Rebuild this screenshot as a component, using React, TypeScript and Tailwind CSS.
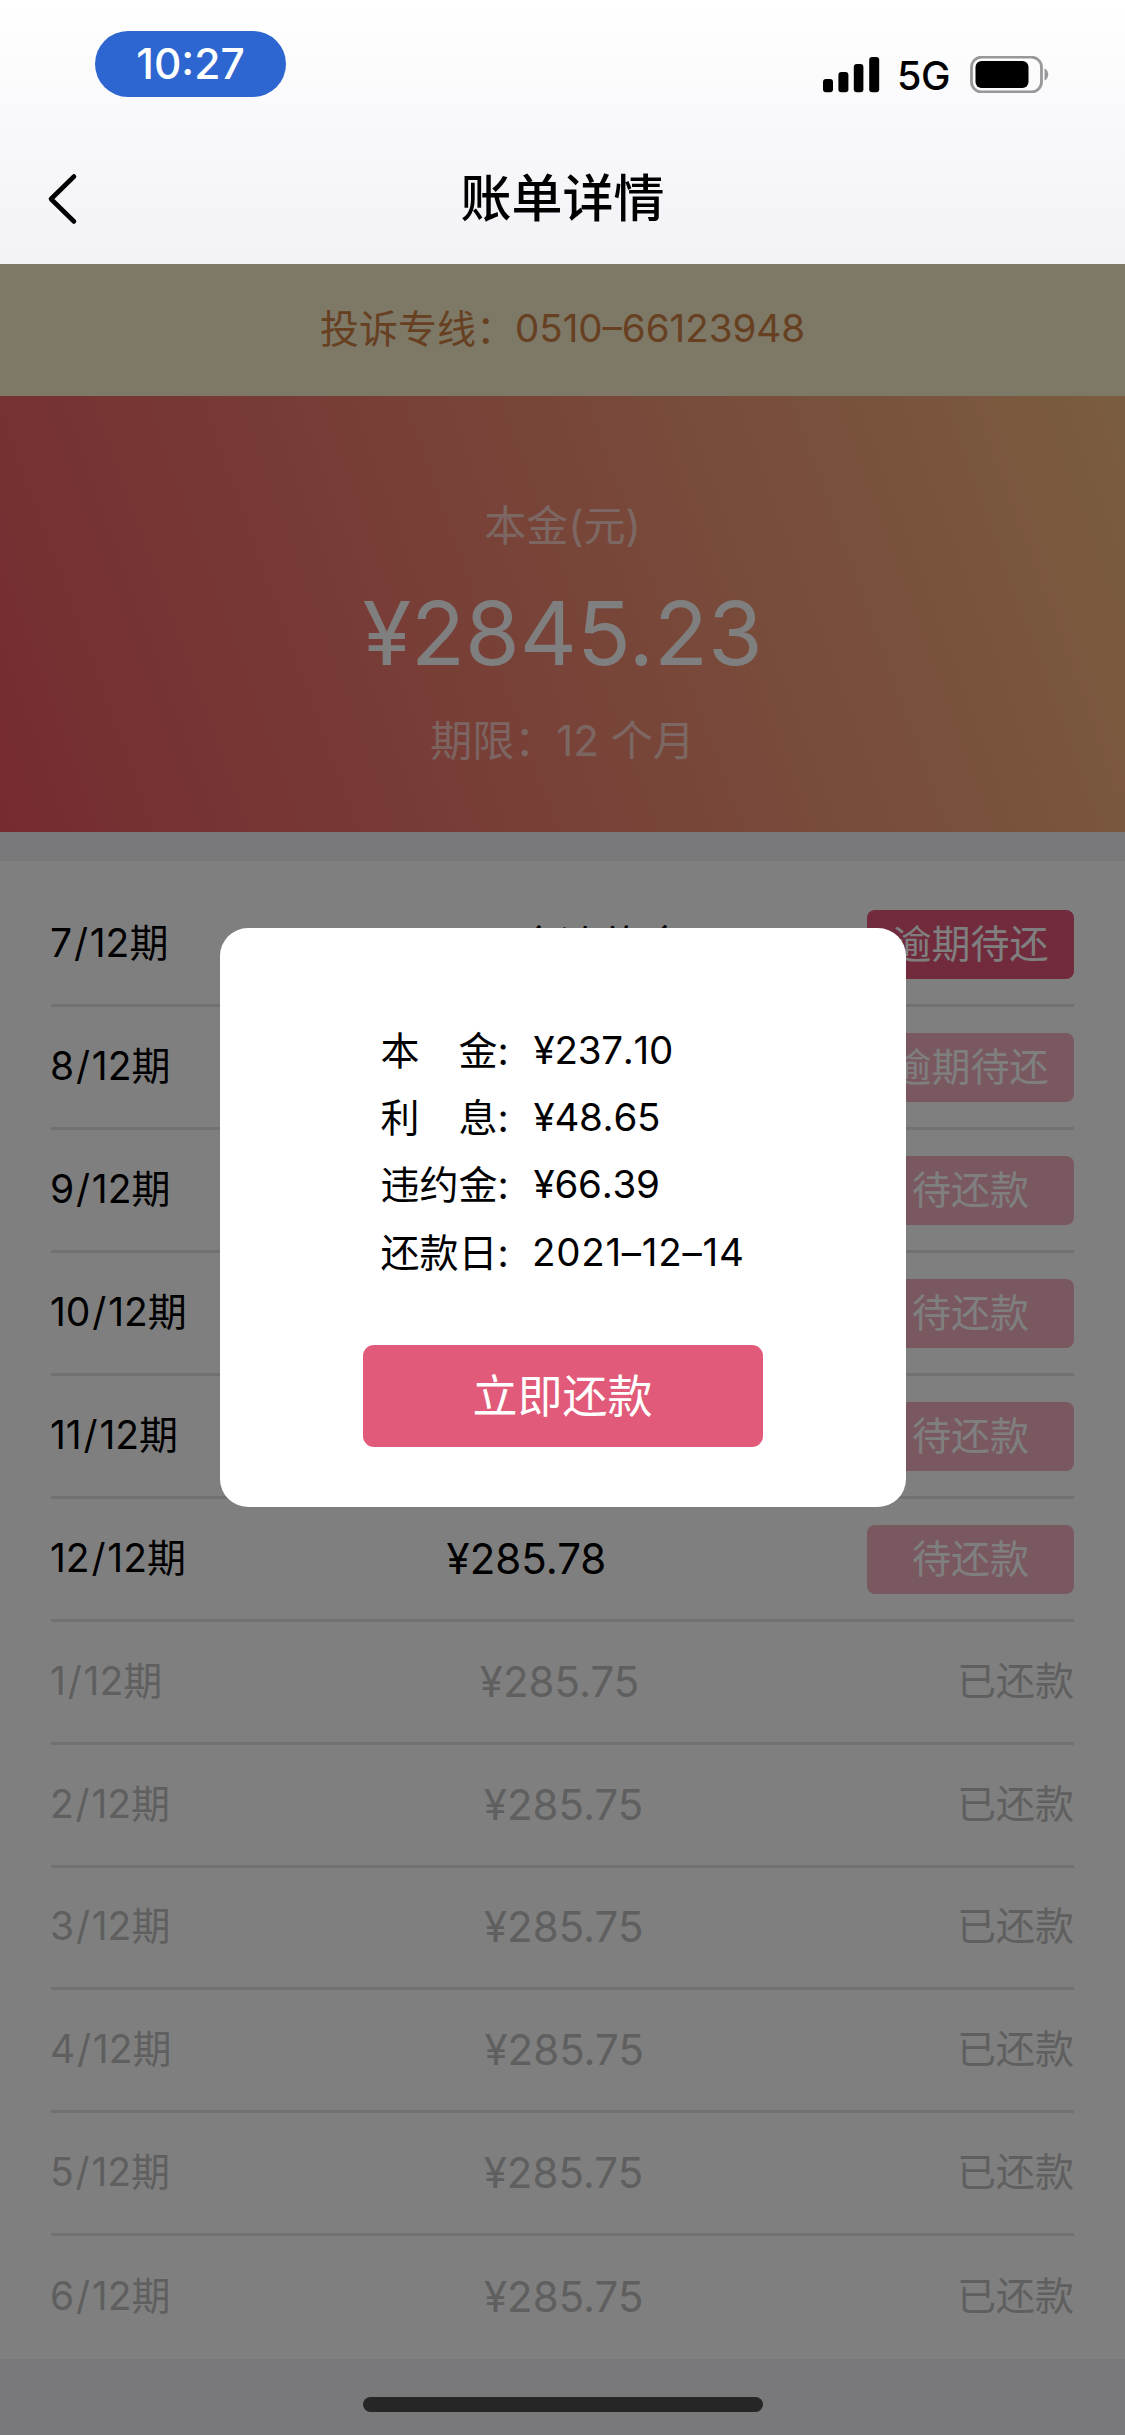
import React from "react";

type Status = "due" | "overdue" | "pending" | "paid";

interface Period {
  no: number;
  amount?: string;
  note?: string;
  status: Status;
}

const periods: Period[] = [
  { no: 7, amount: "¥352.14", note: "(含违约金)", status: "due" },
  { no: 8, status: "overdue" },
  { no: 9, status: "pending" },
  { no: 10, status: "pending" },
  { no: 11, status: "pending" },
  { no: 12, amount: "¥285.78", status: "pending" },
  { no: 1, amount: "¥285.75", status: "paid" },
  { no: 2, amount: "¥285.75", status: "paid" },
  { no: 3, amount: "¥285.75", status: "paid" },
  { no: 4, amount: "¥285.75", status: "paid" },
  { no: 5, amount: "¥285.75", status: "paid" },
  { no: 6, amount: "¥285.75", status: "paid" },
];

const details = [
  { label: "本　金:", value: "¥237.10", tracking: "tracking-[-0.25px]" },
  { label: "利　息:", value: "¥48.65", tracking: "tracking-[-0.25px]" },
  { label: "违约金:", value: "¥66.39", tracking: "tracking-[-0.25px]" },
  { label: "还款日:", value: "2021–12–14", tracking: "tracking-[0.75px]" },
];

function StatusBar() {
  return (
    <div className="flex h-[97px] items-start justify-between pl-[95px] pr-[75px] pt-[31px]">
      <div className="flex h-[66px] w-[191px] items-center justify-center rounded-full bg-[#2d66d0] pt-px text-[42.5px] font-medium leading-none text-white">
        10:27
      </div>
      <div className="box-content flex h-[37px] items-center pt-[25px]">
        <svg width="57" height="37" viewBox="0 0 57 37" className="mr-[17px]">
          <rect x="0" y="23" width="10" height="13.3" rx="3" />
          <rect x="15.4" y="16" width="10" height="20.3" rx="3" />
          <rect x="30.8" y="8" width="9.6" height="28.3" rx="3" />
          <rect x="46.2" y="1" width="10" height="35.3" rx="3" />
        </svg>
        <span className="pt-[3px] text-[39.5px] font-medium leading-[37px] tracking-[-0.5px] text-black">5G</span>
        <svg width="80" height="37" viewBox="0 0 80 37" className="ml-[20px]">
          <rect x="1.5" y="1.2" width="70" height="34.8" rx="10" fill="none" stroke="#98989a" strokeWidth="2.8" />
          <rect x="5.5" y="5" width="53" height="27" rx="6" />
          <path d="M74.5 12.5c5 2 5 10 0 12z" fill="#98989a" />
        </svg>
      </div>
    </div>
  );
}

function NavBar() {
  return (
    <div className="grid h-[167px] grid-cols-[1fr_auto_1fr] items-center px-[46px] pt-[36px]">
      <svg width="34" height="56" viewBox="0 0 34 56">
        <path d="M28 5.5 5 28l23 22.5" fill="none" stroke="#000" strokeWidth="4.6" strokeLinecap="round" strokeLinejoin="round" />
      </svg>
      <h1 className="text-[51px] font-medium leading-none text-black">账单详情</h1>
      <span />
    </div>
  );
}

function StatusCell({ status }: { status: Status }) {
  if (status === "paid") return <span className="pb-[3px] text-[39px] leading-none">已还款</span>;
  const tone = status === "due" ? "bg-[#e35679]" : "bg-[#f3b0c1]";
  return (
    <span className={`flex h-[69px] w-[207px] items-center justify-center rounded-[8px] pb-[2px] text-[39px] leading-none text-white ${tone}`}>
      {status === "pending" ? "待还款" : "逾期待还"}
    </span>
  );
}

function Row({ item, last }: { item: Period; last: boolean }) {
  const paid = item.status === "paid";
  return (
    <li
      className={`flex items-center justify-between ${paid ? "h-[122.8px] text-[#bebebe]" : "h-[123px] text-black"} ${
        last ? "" : "border-b-[3px] border-[#e2e2e2]"
      }`}
    >
      <span className="-ml-px whitespace-nowrap pb-[3px] text-[39px] leading-none">
        {item.no}
        <span className="mx-[1.8px]">/</span>
        12期
      </span>
      {item.amount && (
        <span className="flex items-center whitespace-nowrap text-[42px] leading-none">
          <span>{item.amount}</span>
          {item.note && <span className="-mr-[6px] ml-[8px] pt-[4px]">{item.note}</span>}
        </span>
      )}
      <StatusCell status={item.status} />
    </li>
  );
}

function Dialog() {
  return (
    <div className="absolute left-[219.5px] top-[663.5px] flex h-[579px] w-[686px] flex-col items-center rounded-[28px] bg-white pt-[89px]">
      <dl className="w-[364px] text-[39px] text-black">
        {details.map((d) => (
          <div key={d.value} className="flex h-[67.3px] items-center leading-none">
            <dt className="w-[153px] whitespace-nowrap">{d.label}</dt>
            <dd className={`whitespace-nowrap text-[38.5px] [font-kerning:none] ${d.tracking}`}>{d.value}</dd>
          </div>
        ))}
      </dl>
      <button className="mt-[59px] flex h-[102px] w-[400px] items-center justify-center rounded-[11px] bg-[#e15a79] pt-px text-[45px] leading-none text-white">
        立即还款
      </button>
    </div>
  );
}

export default function App() {
  return (
    <div className="h-[2435px] w-[1125px] overflow-hidden bg-[#f3f3f7] font-['Inter','Noto_Sans_CJK_SC',sans-serif]">
      <header className="h-[264px] bg-linear-to-b from-white to-[#f2f2f7]">
        <StatusBar />
        <NavBar />
      </header>

      <main className="relative h-[2171px]">
        <div className="flex h-[132px] items-center justify-center bg-[#fdf0ce] pb-[4px] text-[39px] leading-none text-[#cc8042]">
          投诉专线：<span className="text-[38.5px]">0510–66123948</span>
        </div>

        <section className="flex h-[436px] flex-col items-center bg-[linear-gradient(70deg,#ec5662,#f5ba80)] pt-[109px] leading-none">
          <p className="text-[42px] text-white/60">本金(元)</p>
          <p className="mt-[42px] text-[88.5px] text-white">¥2845.23</p>
          <p className="mt-[42px] text-[42px] text-white/60">期限：12 个月</p>
        </section>

        <ul className="mt-[29px] h-[1498px] bg-white px-[51px] pt-[23px]">
          {periods.map((p, i) => (
            <Row key={p.no} item={p} last={i === periods.length - 1} />
          ))}
        </ul>

        <div className="absolute inset-0 bg-black/50" />
        <Dialog />
        <div className="absolute bottom-[23px] left-[362.5px] h-[15px] w-[400px] rounded-full bg-[#262626]" />
      </main>
    </div>
  );
}
